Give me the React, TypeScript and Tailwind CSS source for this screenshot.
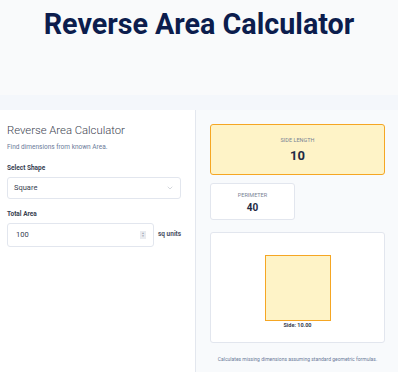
import { ChevronDown } from 'lucide-react';

export default function App() {
  return (
    <div className="flex h-[372px] w-[398px] flex-col overflow-hidden bg-[#f9fafb] font-['Roboto',sans-serif]">
      {/* Page header */}
      <header className="flex h-[95px] shrink-0 justify-center pt-[6px]">
        <h1 className="text-[28.7px] font-bold leading-[36px] text-[#0c1d4d]">Reverse Area Calculator</h1>
      </header>

      <main className="flex flex-1 bg-[#f4f7fb] pt-[15px]">
        {/* Inputs */}
        <aside className="w-[196px] shrink-0 border-r border-[#e3e7ee] bg-white px-[7px] pt-[14px]">
          <h2 className="text-[11.3px] font-light leading-[14px] text-[#3b4250]">Reverse Area Calculator</h2>
          <p className="mt-[5px] text-[6.5px] leading-[8px] text-[#6b7a99]">Find dimensions from known Area.</p>

          <label className="mt-[13px] block text-[6.5px] font-bold leading-[9px] text-[#374151]">Select Shape</label>
          <div className="mt-[4px] flex h-[22px] w-[174px] items-center justify-between rounded-[3px] border border-[#e2e6ee] px-[6px]">
            <span className="text-[7.5px] text-[#374151]">Square</span>
            <ChevronDown size={8} strokeWidth={1.3} className="text-[#9ca3af]" />
          </div>

          <label className="mt-[11px] block text-[6.5px] font-bold leading-[9px] text-[#374151]">Total Area</label>
          <div className="mt-[4px] flex items-center gap-[4px]">
            <div className="flex h-[24px] w-[147px] items-center justify-between rounded-[3px] border border-[#e2e6ee] pl-[8px] pr-[7px]">
              <span className="text-[7.5px] text-[#374151]">100</span>
              <span className="flex h-[8px] w-[6px] flex-col items-center justify-center bg-[#e9ebef] text-[3px] leading-[3px] text-[#9ca3af]">
                <span>▲</span>
                <span>▼</span>
              </span>
            </div>
            <span className="text-[6.5px] font-bold text-[#4a4f63]">sq units</span>
          </div>
        </aside>

        {/* Results */}
        <section className="flex-1 bg-[#f8fafc] px-[14px] pt-[14px]">
          <div className="flex h-[51px] w-[175px] flex-col items-center justify-center rounded-[3px] border border-[#f5a623] bg-[#fef3c7]">
            <span className="text-[5.5px] uppercase leading-[8px] text-[#7b8494]">Side Length</span>
            <span className="mt-[5px] text-[13px] font-bold leading-[14px] text-[#1f2a44]">10</span>
          </div>

          <div className="mt-[8px] flex h-[37px] w-[85px] flex-col items-center justify-center rounded-[3px] border border-[#e2e6ee] bg-white">
            <span className="text-[5.5px] uppercase leading-[8px] text-[#7b8494]">Perimeter</span>
            <span className="mt-[3px] text-[10px] font-bold leading-[11px] text-[#1f2a44]">40</span>
          </div>

          <div className="mt-[12px] flex h-[111px] w-[175px] flex-col items-center rounded-[3px] border border-[#e2e6ee] bg-white pt-[22px]">
            <div className="h-[66px] w-[66px] border border-[#f5a623] bg-[#fef3c7]" />
            <span className="mt-[1px] text-[5.5px] font-bold leading-[7px] text-[#374151]">Side: 10.00</span>
          </div>

          <p className="mt-[13px] text-center text-[5px] leading-[7px] text-[#6b7a99]">
            Calculates missing dimensions assuming standard geometric formulas.
          </p>
        </section>
      </main>
    </div>
  );
}
